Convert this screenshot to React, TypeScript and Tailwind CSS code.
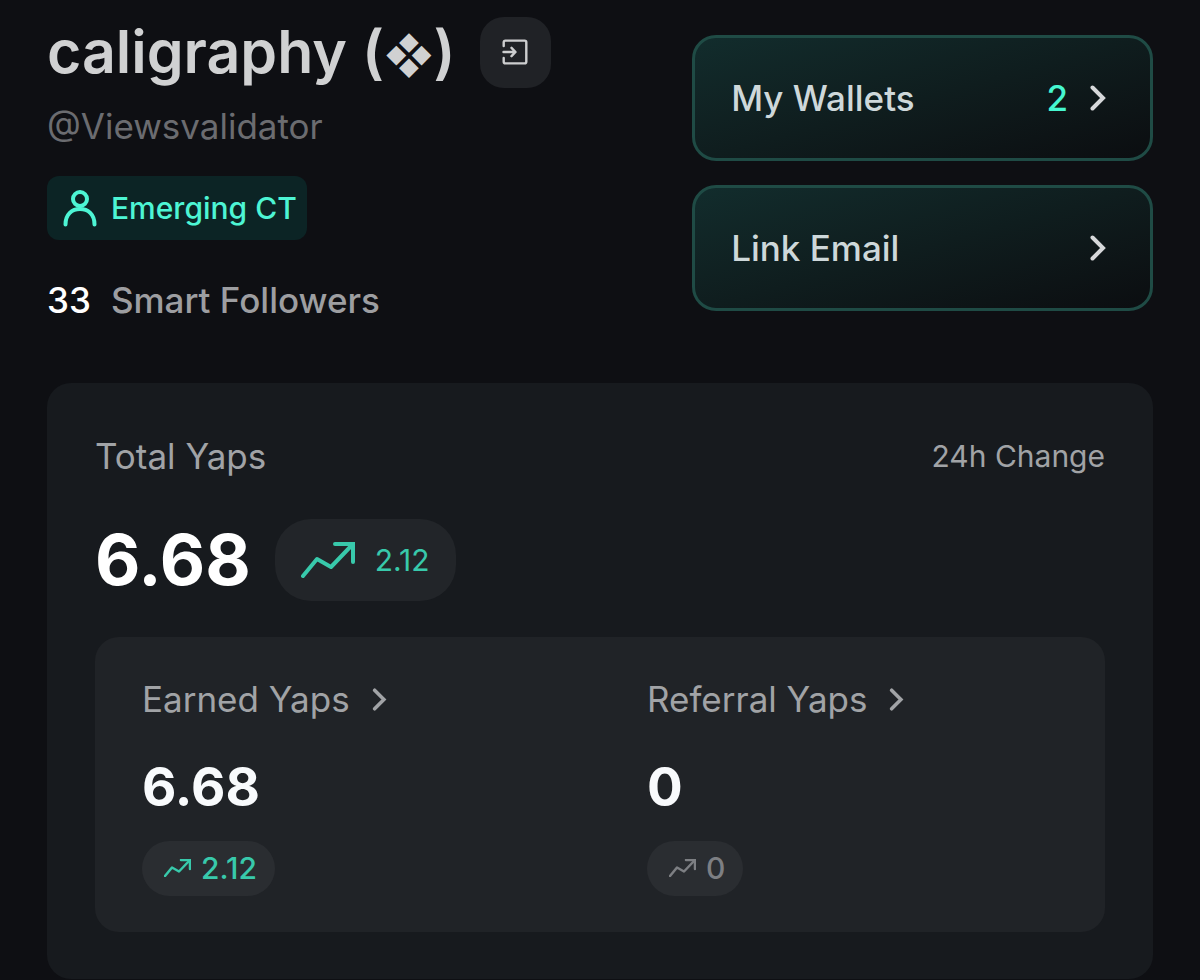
import React from 'react';

interface TrendIconProps {
  className?: string;
  strokeWidth: number;
}

interface YapStatProps {
  label: string;
  value: string;
  change: string;
  active: boolean;
}

const TrendIcon: React.FC<TrendIconProps> = ({ className, strokeWidth }) => (
  <svg viewBox="0 0 54 36" className={className} fill="none" stroke="currentColor" strokeWidth={strokeWidth} strokeLinecap="round" strokeLinejoin="round" aria-hidden="true">
    <path d="M2 34 16 17 30 25 51 3" />
    <path d="M34 2H52V20" strokeLinejoin="miter" />
  </svg>
);

const ChevronIcon: React.FC<{ className?: string }> = ({ className }) => (
  <svg viewBox="0 0 16 26" className={className} fill="none" stroke="currentColor" strokeWidth="4" strokeLinecap="round" aria-hidden="true">
    <path d="M2.5 2.5 13 13 2.5 23.5" />
  </svg>
);

const ActionButton: React.FC<{ label: string; count?: number }> = ({ label, count }) => (
  <button
    type="button"
    className="flex h-[126px] w-full items-center justify-between rounded-3xl border-3 border-[#1f4b45] bg-linear-to-br from-[#122d2d] via-[#0f1d1e] to-[#0b0d10] bg-origin-border pr-11 pl-9 text-[35px] font-medium text-[#ced8da]"
  >
    <span>{label}</span>
    <span className="flex items-center gap-[22px]">
      {count !== undefined && <span className="text-[#46f7d0]">{count}</span>}
      <ChevronIcon className="h-[26px] w-4 text-[#d6d8da]" />
    </span>
  </button>
);

const YapStat: React.FC<YapStatProps> = ({ label, value, change, active }) => (
  <div className="flex flex-1 flex-col items-start px-[47px]">
    <button type="button" className="flex items-center gap-[22px] text-[35px] leading-12 text-[#a1a3a6]">
      {label}
      <ChevronIcon className="h-[23px] w-[15px]" />
    </button>
    <div className="mt-8 text-[53px] leading-16 font-bold text-[#f8fafc]">{value}</div>
    <div
      className={`mt-[22px] flex h-[55px] items-center gap-2.5 rounded-full bg-[#2a2d31] px-[18px] pb-0.5 pl-[22px] text-3xl font-medium ${
        active ? 'text-[#38c9ab]' : 'text-[#7d7f83]'
      }`}
    >
      <TrendIcon className="h-[18px] w-[27px]" strokeWidth={5} />
      {change}
    </div>
  </div>
);

export default function App() {
  return (
    <main className="min-h-screen bg-[#0e0f13] px-[47px] pt-4 font-[Inter,sans-serif] [font-optical-sizing:none]">
      <header className="flex items-start justify-between gap-8">
        <div className="flex flex-col items-start">
          <div className="flex items-center gap-6">
            <h1 className="text-[59px] leading-18 font-semibold text-[#d0d1d2]">
              caligraphy (<span className="text-[47px] leading-none">❖</span>)
            </h1>
            <button type="button" aria-label="Open profile" className="flex size-[71px] items-center justify-center rounded-3xl bg-[#202226] text-[#cdcecf]">
              <svg viewBox="0 0 26 26" className="size-[26px]" fill="none" stroke="currentColor" strokeWidth="2.4" strokeLinecap="round" strokeLinejoin="round" aria-hidden="true">
                <path d="M1.7 7V3.2Q1.7 1.6 3.3 1.6H22.7Q24.3 1.6 24.3 3.2V22.8Q24.3 24.4 22.7 24.4H3.3Q1.7 24.4 1.7 22.8V19" />
                <path d="M1.5 13H13M9.5 8.8 13.5 13 9.5 17.2" />
              </svg>
            </button>
          </div>
          <p className="mt-3.5 text-[35px] leading-12 text-[#6b6c70]">@Viewsvalidator</p>
          <div className="mt-[26px] flex h-16 items-center gap-3.5 rounded-xl bg-[#0c2425] pr-2.5 pl-4 text-3xl font-medium text-[#4df5d4]">
            <svg viewBox="0 0 34 38" className="h-[38px] w-[34px]" fill="none" stroke="currentColor" strokeWidth="4" strokeLinecap="round" aria-hidden="true">
              <circle cx="17" cy="10" r="7" />
              <path d="M2.5 35.5C2.5 25 9 20 17 20S31.500 25 31.500 35.5" />
            </svg>
            Emerging CT
          </div>
          <p className="mt-9 flex gap-5 text-[35px] leading-12 font-medium text-[#9d9ea1]">
            <span className="text-white">33</span>
            Smart Followers
          </p>
        </div>
        <div className="mt-[19px] flex w-5/12 flex-col gap-6">
          <ActionButton label="My Wallets" count={2} />
          <ActionButton label="Link Email" />
        </div>
      </header>

      <section className="mt-[59px] rounded-3xl bg-[#171a1e] px-12 pt-[49px] pb-[47px]">
        <div className="flex items-center justify-between text-[#a1a3a6]">
          <h2 className="text-[35px] leading-12">Total Yaps</h2>
          <span className="text-3xl">24h Change</span>
        </div>
        <div className="mt-[39px] flex items-center gap-6">
          <span className="text-[70px] leading-18 font-bold text-white">6.68</span>
          <div className="flex h-[82px] items-center gap-5 rounded-[36px] bg-[#222529] px-[26px] text-3xl text-[#38c9ab]">
            <TrendIcon className="h-9 w-[54px]" strokeWidth={4} />
            2.12
          </div>
        </div>
        <div className="mt-9 flex rounded-3xl bg-[#202327] pt-[38px] pb-9">
          <YapStat label="Earned Yaps" value="6.68" change="2.12" active />
          <YapStat label="Referral Yaps" value="0" change="0" active={false} />
        </div>
      </section>
    </main>
  );
}
